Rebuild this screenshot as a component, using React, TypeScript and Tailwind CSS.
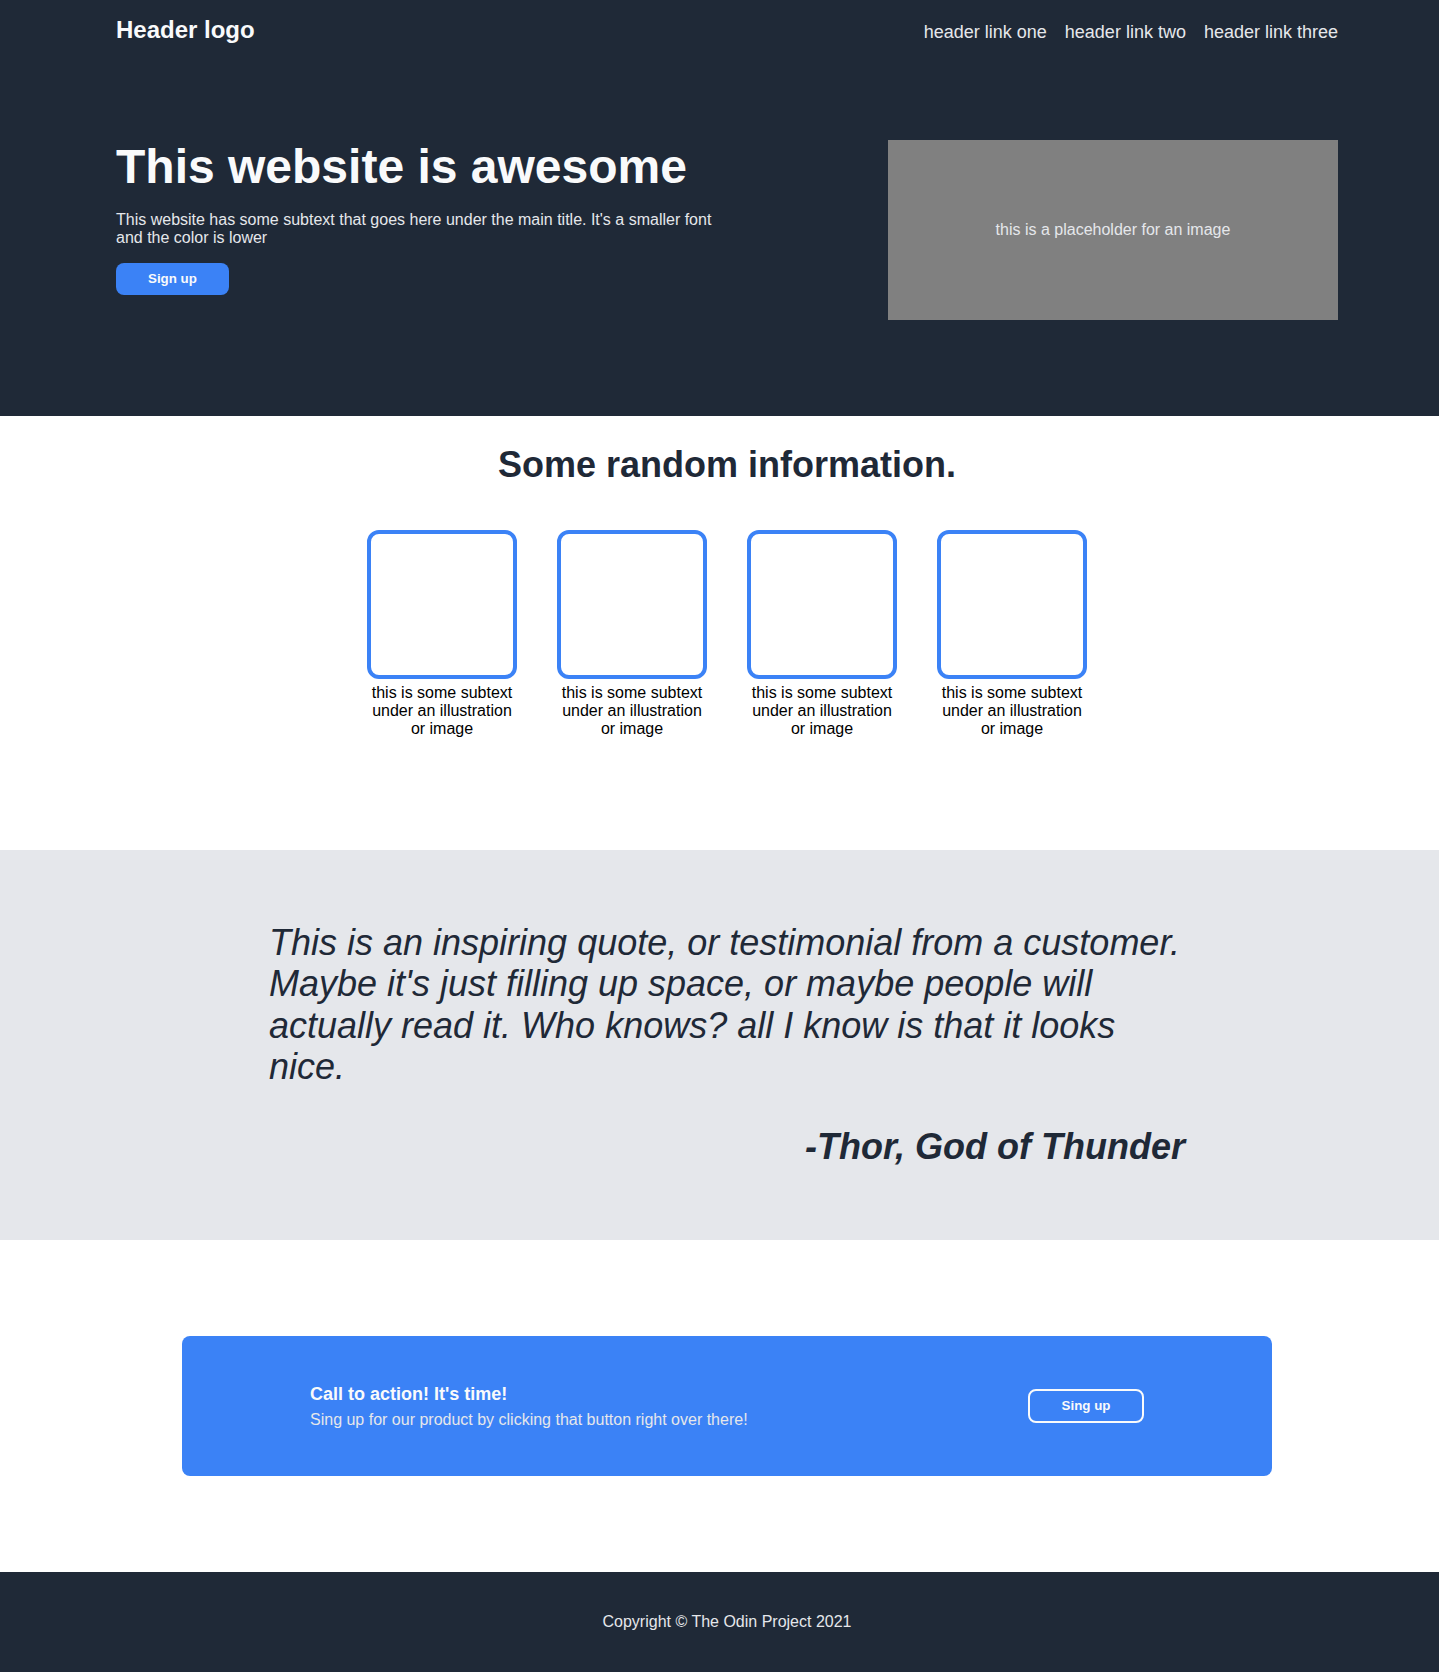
import React from "react";

const font = { fontFamily: '"Liberation Sans", Arial, sans-serif' };

function Card() {
  return (
    <div className="flex w-[150px] flex-col items-center">
      <div className="h-[149px] w-[150px] rounded-xl border-4 border-[#3b82f6] bg-white" />
      <p className="mt-[5px] text-center text-[16px] leading-[18.4px] text-black">
        this is some subtext under an illustration or image
      </p>
    </div>
  );
}

export default function App() {
  return (
    <div style={font} className="w-full bg-white">
      {/* Hero */}
      <section className="bg-[#1f2937]">
        <div className="pl-[15px]">
          <div className="mx-auto w-[1222px] pt-4 pb-24">
            <header className="flex items-baseline justify-between">
              <div className="text-[24px] font-bold leading-[27.6px] text-[#f9fafb]">Header logo</div>
              <nav className="flex items-baseline gap-[18px] text-[18px] leading-[20.7px] text-[#e5e7eb]">
                <a href="#">header link one</a>
                <a href="#">header link two</a>
                <a href="#">header link three</a>
              </nav>
            </header>
            <div className="mt-24 flex items-start justify-between">
              <div className="w-[610px]">
                <h1 className="text-[48px] font-bold leading-[54px] text-[#f9fafb]">This website is awesome</h1>
                <p className="mt-[17px] text-[16px] leading-[18.4px] text-[#e5e7eb]">
                  This website has some subtext that goes here under the main title. It's a smaller font and the color is lower
                </p>
                <button className="mt-4 rounded-lg bg-[#3b82f6] px-8 py-2 text-[13.33px] font-bold leading-[15.3px] text-[#f9fafb]">
                  Sign up
                </button>
              </div>
              <div className="flex h-[180px] w-[450px] items-center justify-center bg-[#808080] text-[16px] text-[#e5e7eb]">
                this is a placeholder for an image
              </div>
            </div>
          </div>
        </div>
      </section>

      {/* Info */}
      <section className="bg-white">
        <div className="pl-[15px]">
          <div className="mx-auto flex w-[1222px] flex-col items-center pt-[28px] pb-[111px]">
            <h2 className="text-[36px] font-bold leading-[41px] text-[#1f2937]">Some random information.</h2>
            <div className="mt-[45px] flex gap-10">
              <Card />
              <Card />
              <Card />
              <Card />
            </div>
          </div>
        </div>
      </section>

      {/* Quote */}
      <section className="bg-[#e5e7eb]">
        <div className="pl-[15px]">
          <div className="mx-auto w-[916px] py-[72px] text-[#1f2937]">
            <p className="text-[36px] italic leading-[41.4px]">
              This is an inspiring quote, or testimonial from a customer. Maybe it's just filling up space, or maybe people will actually read it. Who knows? all I know is that it looks nice.
            </p>
            <p className="mt-[39px] text-right text-[36px] font-bold italic leading-[41.4px]">-Thor, God of Thunder</p>
          </div>
        </div>
      </section>

      {/* CTA */}
      <section className="bg-white">
        <div className="pl-[15px]">
          <div className="mx-auto w-[1090px] py-24">
            <div className="flex h-[140px] items-center justify-between rounded-lg bg-[#3b82f6] px-32">
              <div className="mt-[2px]">
                <div className="text-[18px] font-bold leading-[20.7px] text-[#f9fafb]">Call to action! It's time!</div>
                <div className="mt-[6px] text-[16px] leading-[18.4px] text-[#e5e7eb]">
                  Sing up for our product by clicking that button right over there!
                </div>
              </div>
              <button className="flex h-[34px] w-[116px] items-center justify-center rounded-lg border-2 border-[#f9fafb] text-[13.33px] font-bold text-[#f9fafb]">
                Sing up
              </button>
            </div>
          </div>
        </div>
      </section>

      {/* Footer */}
      <footer className="bg-[#1f2937]">
        <div className="pl-[15px]">
          <div className="py-[41px] text-center text-[16px] leading-[18.4px] text-[#e5e7eb]">
            Copyright © The Odin Project 2021
          </div>
        </div>
      </footer>
    </div>
  );
}
